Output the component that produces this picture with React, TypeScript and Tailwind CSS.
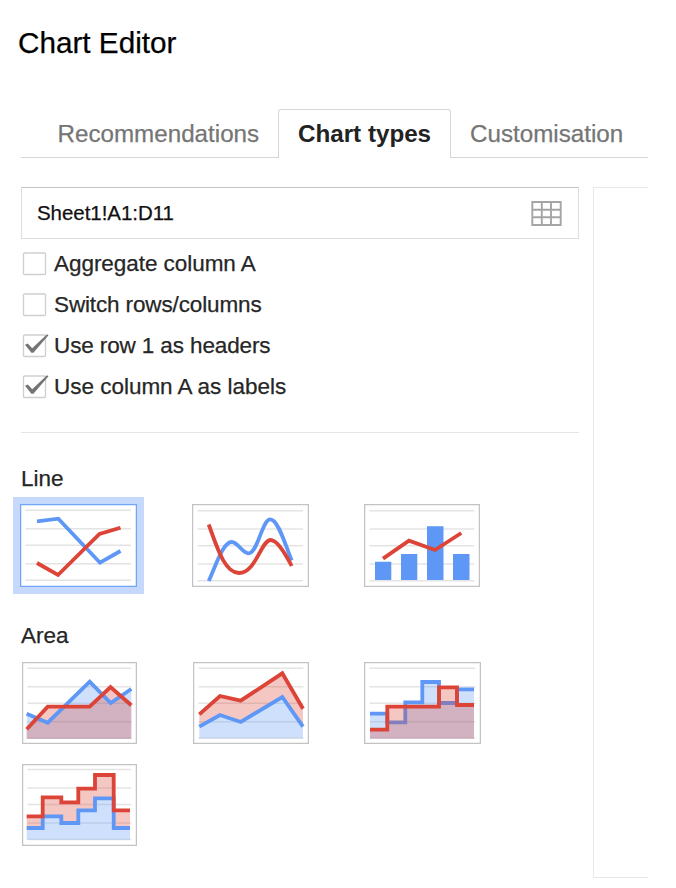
import type { ReactNode } from "react";

const BLUE = "#5e97f6";
const RED = "#db4437";

const options = [
  { label: "Aggregate column A", checked: false, tracking: "tracking-[-0.05px]" },
  { label: "Switch rows/columns", checked: false, tracking: "tracking-[-0.13px]" },
  { label: "Use row 1 as headers", checked: true, tracking: "tracking-[-0.12px]" },
  { label: "Use column A as labels", checked: true, tracking: "tracking-[-0.02px]" },
];

function Grid({ top = 6.3, right = 111 }: { top?: number; right?: number }) {
  return (
    <g stroke="#e4e4e4" strokeWidth="1.5">
      {[0, 18.4, 35, 53.4, 70].map((dy) => (
        <line key={dy} x1="5.5" x2={right} y1={top + dy} y2={top + dy} />
      ))}
    </g>
  );
}

function Stroke({ d, color }: { d: string; color: string }) {
  return <path d={d} fill="none" stroke={color} strokeWidth="3.8" strokeLinejoin="miter" />;
}

function Fill({ d, color, opacity = 0.3 }: { d: string; color: string; opacity?: number }) {
  return <path d={d} fill={color} fillOpacity={opacity} />;
}

function Thumb({ width, height, selected, children }: { width: number; height: number; selected?: boolean; children: ReactNode }) {
  return (
    <button className={selected ? "block bg-white outline-[7px] outline-[#c6d9fd]" : "block bg-white"}>
      <svg width={width} height={height} viewBox={`0 0 ${width} ${height}`} className="block">
        {children}
        <rect x="0.6" y="0.6" width={width - 1.2} height={height - 1.2} fill="none" stroke={selected ? "#72a4f7" : "#c3c3c3"} strokeWidth="1.3" />
      </svg>
    </button>
  );
}

function Checkbox({ label, checked, tracking }: { label: string; checked: boolean; tracking: string }) {
  return (
    <label className="flex h-[41px] items-center">
      <svg width="28" height="32" viewBox="0 0 28 32" className="shrink-0">
        <rect x="2.5" y="5" width="22" height="21.5" rx="1" fill="#fff" stroke="#cfcfcf" strokeWidth="1.3" />
        {checked && <path d="M4 14.8L6.8 13.6L11.2 18.2L26 4.3L27.5 5.2L12.4 22.8L10.4 22.8Z" fill="#747474" />}
      </svg>
      <span className={`ml-[5px] text-[22.5px] leading-[28px] ${tracking}`}>{label}</span>
    </label>
  );
}

export default function App() {
  return (
    <div className="h-[888px] w-[676px] overflow-hidden bg-white pt-[25px] font-['Liberation_Sans',Arial,sans-serif] text-[#262626] [-webkit-text-stroke:0.25px]">
      <h1 className="ml-[18px] h-[84px] text-[29.7px] leading-[36px] text-black">Chart Editor</h1>

      <nav className="ml-[21px] flex h-[49px] w-[627px] text-[24.2px] leading-[49px] whitespace-nowrap text-[#757575]">
        <div className="w-[257px] border-b-[1.5px] border-[#d6d6d6] pl-[36.5px]">Recommendations</div>
        <div className="w-[173px] rounded-t-[3px] border-x-[1.5px] border-t-[1.5px] border-[#d6d6d6] pl-[19px] leading-[47px] font-bold text-[#222] [-webkit-text-stroke:0px]">Chart types</div>
        <div className="w-[197px] border-b-[1.5px] border-[#d6d6d6] pl-[19px]">Customisation</div>
      </nav>

      <main className="mt-[29px] flex">
        <section className="w-[593px] shrink-0">
          <div className="ml-[21px] flex h-[52px] w-[558px] items-center justify-between border-[1.5px] border-[#dedede] border-t-[#c4c4c4] pr-[16px] pl-[15px]">
            <span className="text-[20.5px] tracking-[-0.05px] text-[#111]">Sheet1!A1:D11</span>
            <svg width="32" height="26" viewBox="0 0 32 26" fill="none" stroke="#a5a5a5" strokeWidth="1.9">
              <path d="M2.3 2H30.7V25H2.3ZM11.8 2V25M21 2V25M2.3 9.7H30.7M2.3 17.3H30.7" />
            </svg>
          </div>

          <div className="mt-[4px] ml-[21px]">
            {options.map((o) => (
              <Checkbox key={o.label} {...o} />
            ))}
          </div>

          <div className="mt-[25px] ml-[21px] w-[558px] border-t-[1.5px] border-[#e5e5e5]" />

          <h2 className="mt-[32px] ml-[21px] text-[22.5px] leading-[28px]">Line</h2>
          <div className="mt-[11px] ml-[20px] flex h-[83px]">
            <div className="w-[172px]">
              <Thumb width={117} height={83} selected>
                <Grid />
                <Stroke color={BLUE} d="M17 17.3L38.3 14.7L80 58.7L100.5 47" />
                <Stroke color={RED} d="M17 59L38 71L79.5 30L100.5 23.7" />
              </Thumb>
            </div>
            <div className="w-[172px]">
              <Thumb width={117} height={83}>
                <Grid top={6.7} />
                <Stroke color={BLUE} d="M16.7 77C24 61 31 38 39.7 38C46 38 50 49.3 56.5 49.3C66 49.3 70 15.3 78.3 15.3C86 15.3 93 40 99.7 56.5" />
                <Stroke color={RED} d="M16.7 20.5C24 40 32 69 47 69C64 69 69 36 78.7 36C85 36 94 51 99.7 62" />
              </Thumb>
            </div>
            <Thumb width={116} height={83}>
              <Grid top={6.7} right={110.3} />
              <path fill={BLUE} d="M11 57.7h16.3V76H11ZM37 50h16.3v26H37ZM63 22.3h16.5V76H63ZM89 50h16.5v26H89Z" />
              <Stroke color={RED} d="M19 54.6L45 36.7L71 46L97.3 29" />
            </Thumb>
          </div>

          <h2 className="mt-[35px] ml-[21px] text-[22.5px] leading-[28px]">Area</h2>
          <div className="mt-[12px] ml-[22px] grid grid-cols-[171px_171px_171px] gap-y-[20px]">
            <Thumb width={115} height={82}>
              <Grid right={109.3} />
              <Fill color={BLUE} d="M4.7 51.7L25.7 60.7L67.7 19.7L88.7 41L109.3 27V76.7H4.7Z" />
              <Fill color={RED} d="M4.7 67.3L25.7 44.7H67.7L88.5 25L109.3 43.3V76.7H4.7Z" />
              <Stroke color={BLUE} d="M4.7 51.7L25.7 60.7L67.7 19.7L88.7 41L109.3 27" />
              <Stroke color={RED} d="M4.7 67.3L25.7 44.7H67.7L88.5 25L109.3 43.3" />
            </Thumb>
            <Thumb width={116} height={82}>
              <Grid right={110.5} />
              <Fill color={RED} d="M6.3 52.3L27 34L47.7 38.7L89.3 11.3L110 46.7V64.7L89.3 35L47.7 60L27 53L6.3 64.7Z" />
              <Fill color={BLUE} d="M6.3 64.7L27 53L47.7 60L89.3 35L110 64.7V76.3H6.3Z" />
              <Stroke color={RED} d="M6.3 52.3L27 34L47.7 38.7L89.3 11.3L110 46.7" />
              <Stroke color={BLUE} d="M6.3 64.7L27 53L47.7 60L89.3 35L110 64.7" />
            </Thumb>
            <Thumb width={117} height={82}>
              <Grid right={111.5} />
              <Fill color={BLUE} d="M6 51.7H23.3V60.3H41.3V40.3H58.3V20H75V41H93V27.3H110V76.5H6Z" />
              <Stroke color={BLUE} d="M6 51.7H23.3V60.3H41.3V40.3H58.3V20H75V41H93V27.3H110" />
              <Fill color={RED} d="M6 67.7H23.3V44.7H75V25.3H93V43H110V76.5H6Z" />
              <Stroke color={RED} d="M6 67.7H23.3V44.7H75V25.3H93V43H110" />
            </Thumb>
            <Thumb width={115} height={82}>
              <Grid top={5.6} right={109.3} />
              <Fill color={RED} d="M4.7 52.3H20.7V33.3H39.3V38.3H56.3V24.7H73V11H91.7V46.3H108V64H91.7V34.3H73V46.3H56.3V59H39.3V52.3H20.7V64H4.7Z" />
              <Fill color={BLUE} d="M4.7 64H20.7V52.3H39.3V59H56.3V46.3H73V34.3H91.7V64H108V75.7H4.7Z" />
              <Stroke color={BLUE} d="M4.7 64H20.7V52.3H39.3V59H56.3V46.3H73V34.3H91.7V64H108" />
              <Stroke color={RED} d="M4.7 52.3H20.7V33.3H39.3V38.3H56.3V24.7H73V11H91.7V46.3H108" />
            </Thumb>
          </div>
        </section>
        <aside className="h-[691px] w-[55px] border-y-[1.5px] border-l-[1.5px] border-[#e8e8e8]" />
      </main>
    </div>
  );
}
